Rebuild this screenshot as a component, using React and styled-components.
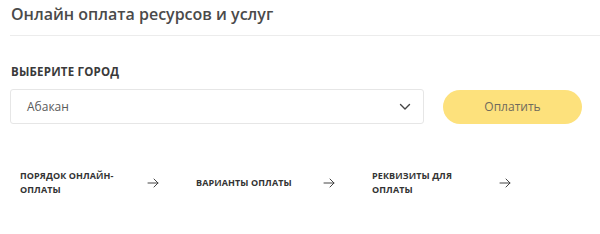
import styled, { createGlobalStyle } from "styled-components";

const GlobalStyle = createGlobalStyle`
  html, body {
    margin: 0;
    padding: 0;
    background: #ffffff;
  }
  body {
    font-family: "Open Sans", "Liberation Sans", sans-serif;
  }
`;

const Page = styled.div`
  width: 600px;
  height: 234px;
  overflow: hidden;
  background: #ffffff;
`;

const Header = styled.div`
  margin-left: 10px;
  padding: 3px 0 0 1px;
  box-sizing: border-box;
  height: 36px;
  border-bottom: 1px solid #ececec;
`;

const Title = styled.h1`
  margin: 0;
  font-size: 16px;
  line-height: 22px;
  font-weight: 600;
  color: #4a4a4a;
`;

const Body = styled.div`
  padding: 29px 0 0 10px;
`;

const Label = styled.div`
  font-size: 11.5px;
  line-height: 14px;
  font-weight: 700;
  color: #3a3a3a;
  letter-spacing: 0.2px;
  margin-left: 1px;
  margin-bottom: 10px;
`;

const Row = styled.div`
  display: flex;
  align-items: center;
  gap: 19px;
`;

const Select = styled.div`
  width: 414px;
  height: 35px;
  box-sizing: border-box;
  border: 1px solid #e6e6e6;
  border-radius: 3px;
  display: flex;
  align-items: center;
  justify-content: space-between;
  padding: 0 12px 0 16px;
  font-size: 12px;
  color: #5a5a5a;
`;

const PayButton = styled.button`
  width: 139px;
  height: 34px;
  border: none;
  border-radius: 17px;
  background: #fde17c;
  color: #6f6a5c;
  font-family: inherit;
  font-size: 12px;
  cursor: pointer;
`;

const Links = styled.div`
  display: flex;
  padding: 45px 0 0 20px;
`;

const LinkItem = styled.a`
  width: 176px;
  display: flex;
  align-items: center;
  text-decoration: none;
  cursor: pointer;
`;

const LinkText = styled.span`
  width: 127px;
  font-size: 9px;
  line-height: 14px;
  font-weight: 700;
  color: #333333;
  letter-spacing: 0.1px;
  text-transform: uppercase;
`;

const Arrow = () => (
  <svg width="12" height="10" viewBox="0 0 12 10" fill="none">
    <path d="M1 5h10M7 1l4 4-4 4" stroke="#444" strokeWidth="1" strokeLinecap="round" strokeLinejoin="round" />
  </svg>
);

const Chevron = () => (
  <svg width="12" height="8" viewBox="0 0 12 8" fill="none">
    <path d="M1.5 1.5L6 6l4.5-4.5" stroke="#444" strokeWidth="1.4" strokeLinecap="round" strokeLinejoin="round" />
  </svg>
);

const links = [
  ["Порядок онлайн-", "оплаты"],
  ["Варианты оплаты"],
  ["Реквизиты для", "оплаты"],
];

export default function App() {
  return (
    <Page>
      <GlobalStyle />
      <Header>
        <Title>Онлайн оплата ресурсов и услуг</Title>
      </Header>
      <Body>
        <Label>ВЫБЕРИТЕ ГОРОД</Label>
        <Row>
          <Select>
            <span>Абакан</span>
            <Chevron />
          </Select>
          <PayButton>Оплатить</PayButton>
        </Row>
      </Body>
      <Links>
        {links.map((lines, i) => (
          <LinkItem key={i}>
            <LinkText>
              {lines.map((l, j) => (
                <span key={j}>
                  {l}
                  {j < lines.length - 1 && <br />}
                </span>
              ))}
            </LinkText>
            <Arrow />
          </LinkItem>
        ))}
      </Links>
    </Page>
  );
}
